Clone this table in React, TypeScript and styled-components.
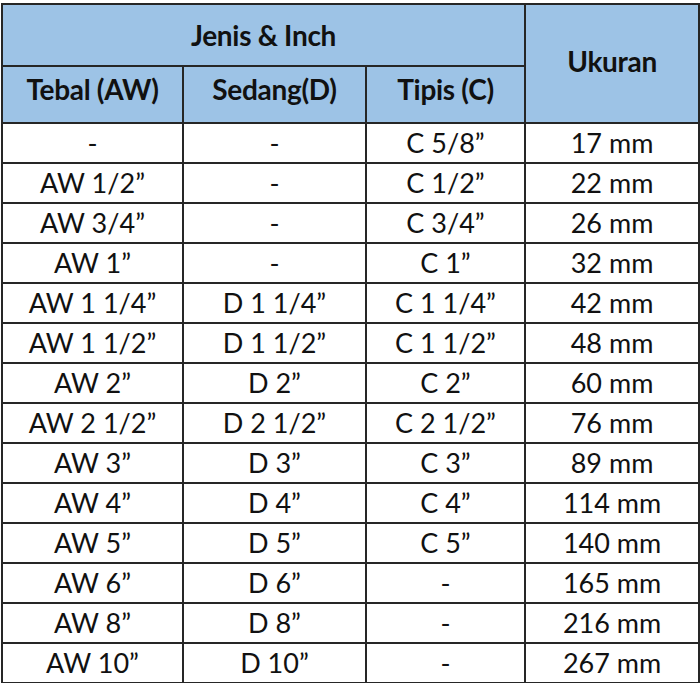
import * as React from 'react';
import styled, { createGlobalStyle } from 'styled-components';

const GlobalStyle = createGlobalStyle`
    html, body {
        margin: 0;
        padding: 0;
        background: #ffffff;
    }
`;

const Wrap = styled.div`
    padding: 3px 0 0 1px;
    width: 700px;
    height: 683px;
    box-sizing: border-box;
    overflow: hidden;
`;

const Table = styled.table`
    border-collapse: collapse;
    table-layout: fixed;
    width: 697px;
    font-family: Lato, "Open Sans", sans-serif;
    color: #111111;
`;

const HeadCell = styled.th<{ $h?: number; $lift?: number }>`
    background: #9dc3e6;
    border: 2px solid #262626;
    font-weight: 700;
    font-size: 28px;
    letter-spacing: -0.3px;
    text-align: center;
    padding: 0 0 ${p => p.$lift ?? 0}px 0;
    height: ${p => p.$h ?? 57}px;
    box-sizing: border-box;
    line-height: 1;
`;

const Cell = styled.td`
    border: 2px solid #262626;
    font-size: 27px;
    text-align: center;
    padding: 0 0 2px 0;
    height: 40px;
    box-sizing: border-box;
    background: #ffffff;
    line-height: 1;
`;

const rows: string[][] = [
    ["-", "-", "C 5/8”", "17 mm"],
    ["AW 1/2”", "-", "C 1/2”", "22 mm"],
    ["AW 3/4”", "-", "C 3/4”", "26 mm"],
    ["AW 1”", "-", "C 1”", "32 mm"],
    ["AW 1 1/4”", "D 1 1/4”", "C 1 1/4”", "42 mm"],
    ["AW 1 1/2”", "D 1 1/2”", "C 1 1/2”", "48 mm"],
    ["AW 2”", "D 2”", "C 2”", "60 mm"],
    ["AW 2 1/2”", "D 2 1/2”", "C 2 1/2”", "76 mm"],
    ["AW 3”", "D 3”", "C 3”", "89 mm"],
    ["AW 4”", "D 4”", "C 4”", "114 mm"],
    ["AW 5”", "D 5”", "C 5”", "140 mm"],
    ["AW 6”", "D 6”", "-", "165 mm"],
    ["AW 8”", "D 8”", "-", "216 mm"],
    ["AW 10”", "D 10”", "-", "267 mm"],
];

export default function App() {
    return (
        <Wrap>
            <GlobalStyle />
            <Table>
                <colgroup>
                    <col style={{ width: 181 }} />
                    <col style={{ width: 183 }} />
                    <col style={{ width: 159 }} />
                    <col style={{ width: 174 }} />
                </colgroup>
                <thead>
                    <tr>
                        <HeadCell colSpan={3} $h={62}>Jenis &amp; Inch</HeadCell>
                        <HeadCell rowSpan={2} $h={119} $lift={5}>Ukuran</HeadCell>
                    </tr>
                    <tr>
                        <HeadCell $lift={12}>Tebal (AW)</HeadCell>
                        <HeadCell $lift={12}>Sedang(D)</HeadCell>
                        <HeadCell $lift={12}>Tipis (C)</HeadCell>
                    </tr>
                </thead>
                <tbody>
                    {rows.map((r, i) => (
                        <tr key={i}>
                            {r.map((c, j) => <Cell key={j}>{c}</Cell>)}
                        </tr>
                    ))}
                </tbody>
            </Table>
        </Wrap>
    );
}
